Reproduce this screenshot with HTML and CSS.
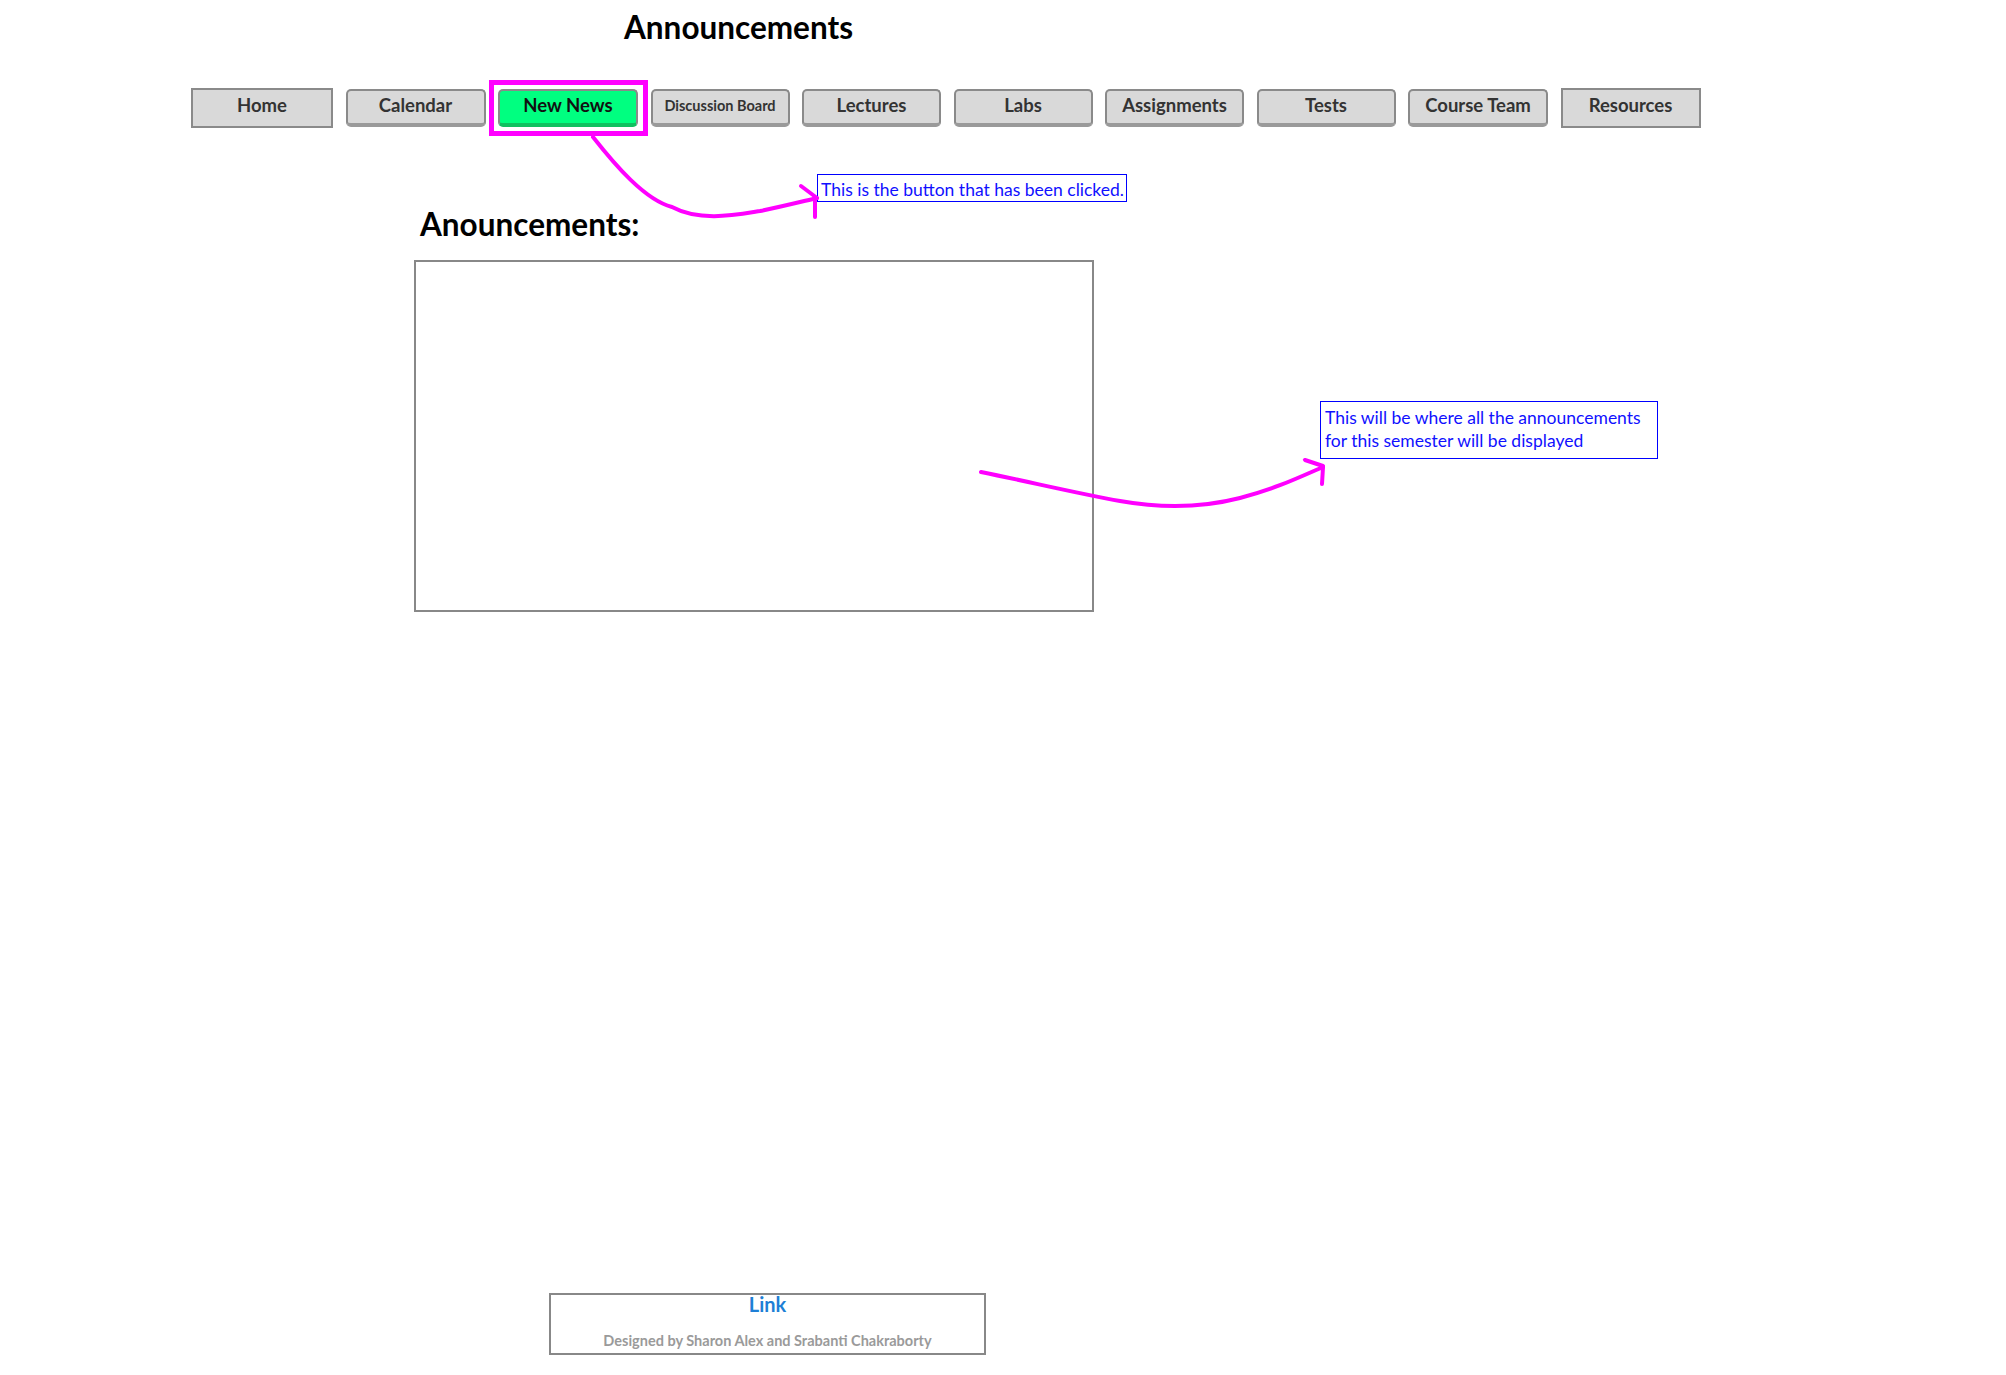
FILE: index.html
```html
<!DOCTYPE html>
<html lang="en">
<head>
<meta charset="utf-8">
<title>Announcements</title>
<link rel="stylesheet" href="styles.css">
</head>
<body>
<div class="page">
  <h1 class="title">Announcements</h1>
  <nav class="nav">
    <a class="btn btn-square btn-home">Home</a>
    <a class="btn btn-cal">Calendar</a>
    <a class="btn btn-active">New News</a>
    <a class="btn btn-small">Discussion Board</a>
    <a class="btn">Lectures</a>
    <a class="btn">Labs</a>
    <a class="btn">Assignments</a>
    <a class="btn">Tests</a>
    <a class="btn btn-wide">Course Team</a>
    <a class="btn btn-square btn-res">Resources</a>
  </nav>
  <h2 class="section-title">Anouncements:</h2>
  <div class="news-box"></div>
  <footer class="footer">
    <a class="footer-link">Link</a>
    <p class="footer-credit">Designed by Sharon Alex and Srabanti Chakraborty</p>
  </footer>

  <div class="note note-clicked">This is the button that has been clicked.</div>
  <div class="note note-display">This will be where all the announcements<br>for this semester will be displayed</div>

  <svg class="arrows" width="2006" height="1375" viewBox="0 0 2006 1375">
    <g fill="none" stroke="#ff00ff" stroke-width="4" stroke-linecap="round" stroke-linejoin="round">
      <path d="M593 137 C615 165 645 200 672 207 C700 222 735 215 760 211 C780 207 800 202 817 198"/>
      <path d="M801 186 L817 198"/>
      <path d="M815 200 L815 217"/>
      <path d="M981 472 C1030 482 1080 494 1120 501 C1165 509 1205 507 1240 498 C1275 489 1300 477 1323 467"/>
      <path d="M1305 460 L1323 466"/>
      <path d="M1323 467 L1322 484"/>
    </g>
  </svg>
</div>
</body>
</html>
```
FILE: styles.css
```css
html, body {
  margin: 0;
  padding: 0;
  background: #ffffff;
}

body {
  font-family: Lato, "Noto Sans", "Liberation Sans", sans-serif;
  color: #000;
}

.page {
  position: relative;
  min-height: 1375px;
  box-sizing: border-box;
  padding-left: 191px;
  display: flex;
  flex-direction: column;
  align-items: flex-start;
}

.title {
  margin: 9px 0 0 433px;
  font-size: 31.5px;
  line-height: 36px;
  font-weight: 700;
}

.nav {
  margin-top: 43px;
  display: flex;
  align-items: center;
  gap: 12.5px;
}

.btn {
  position: relative;
  box-sizing: border-box;
  width: 139px;
  height: 38px;
  display: flex;
  align-items: center;
  justify-content: center;
  padding-bottom: 4px;
  background: #d9d9d9;
  border: 2px solid #8a8a8a;
  border-bottom: 4px solid #9a9a9a;
  border-radius: 5px;
  color: #333333;
  font-size: 18.5px;
  font-weight: 700;
  text-decoration: none;
  white-space: nowrap;
}

.btn-square {
  border-radius: 0;
  height: 40px;
  border-bottom: 2px solid #8a8a8a;
  padding-bottom: 6px;
}

.btn-home { width: 142px; }
.btn-cal { width: 140px; }
.btn-res { width: 140px; }
.btn-wide { width: 140px; }

.btn-small {
  font-size: 14.5px;
}

.btn-active {
  width: 140px;
  background: #00ff80;
  border-bottom-color: #10c060;
  color: #111111;
}

.btn-active::after {
  content: "";
  position: absolute;
  top: -11px;
  left: -11px;
  right: -12px;
  bottom: -13px;
  border: 5px solid #ff00ff;
}

.section-title {
  margin: 79px 0 0 229px;
  font-size: 31.5px;
  line-height: 35px;
  font-weight: 700;
}

.news-box {
  margin: 18px 0 0 223px;
  box-sizing: border-box;
  width: 680px;
  height: 352px;
  border: 2px solid #888888;
}

.footer {
  margin: auto 0 20px 358px;
  box-sizing: border-box;
  width: 437px;
  height: 62px;
  border: 2px solid #888888;
  display: flex;
  flex-direction: column;
  align-items: center;
}

.footer-link {
  margin-top: -3px;
  font-size: 20px;
  line-height: 24px;
  font-weight: 700;
  color: #1e7fd6;
  text-decoration: none;
}

.footer-credit {
  margin: 16px 0 0;
  font-size: 14.5px;
  line-height: 17px;
  font-weight: 700;
  color: #9a9a9a;
}

.note {
  position: absolute;
  box-sizing: border-box;
  border: 1px solid #0000ff;
  color: #1010ff;
  font-size: 17.5px;
  line-height: 23px;
  background: #ffffff;
  padding: 3px 3px 0;
  white-space: nowrap;
}

.note-clicked {
  left: 817px;
  top: 174px;
  width: 310px;
  height: 28px;
}

.note-display {
  left: 1320px;
  top: 401px;
  width: 338px;
  height: 58px;
  padding-top: 4px;
  padding-left: 4px;
}

.arrows {
  position: absolute;
  left: 0;
  top: 0;
  pointer-events: none;
}
```
